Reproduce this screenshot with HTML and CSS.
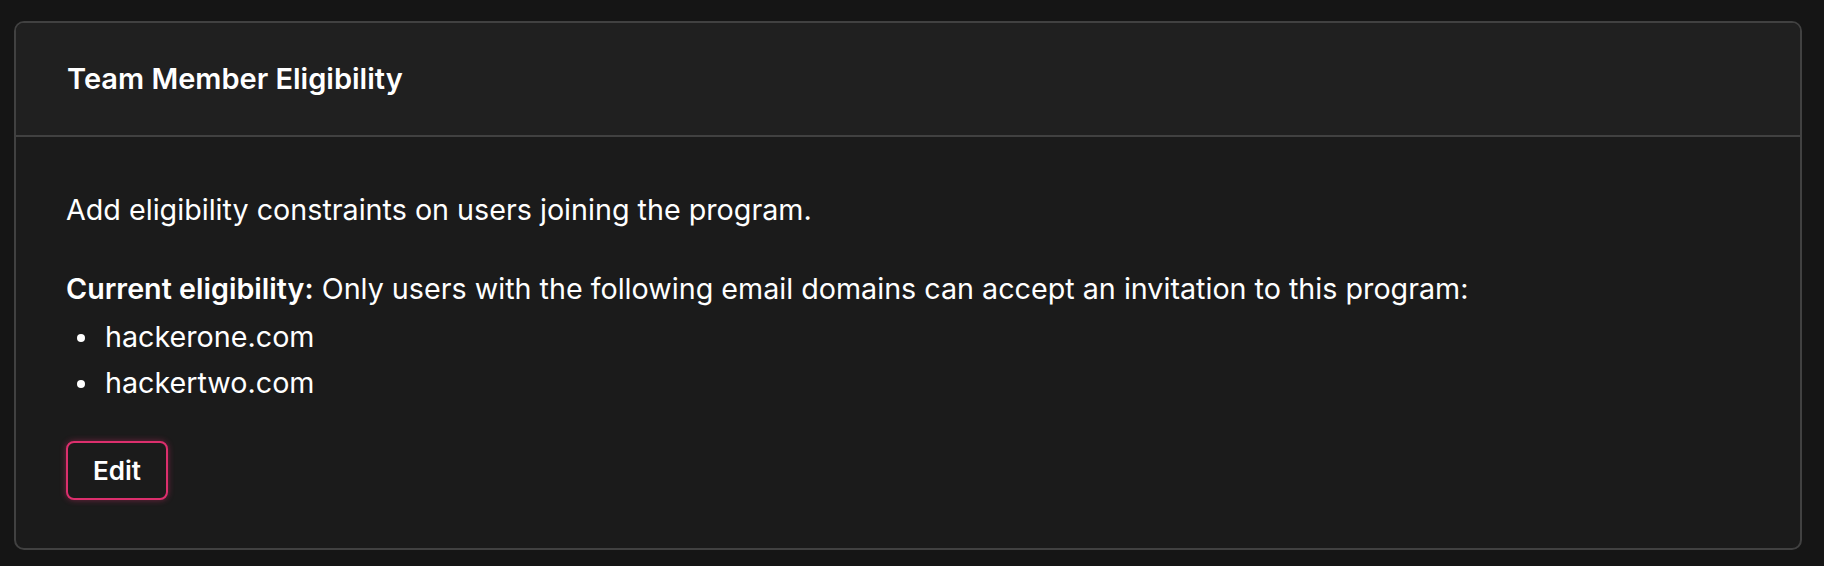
FILE: index.html
```html
<!DOCTYPE html>
<html lang="en">
<head>
<meta charset="utf-8">
<title>Team Member Eligibility</title>
<link rel="stylesheet" href="styles.css">
</head>
<body>
<section class="card">
  <header class="card-header">
    <h2 class="card-title">Team Member Eligibility</h2>
  </header>
  <div class="card-body">
    <p class="intro">Add eligibility constraints on users joining the program.</p>
    <p class="current"><strong>Current eligibility:</strong> Only users with the following email domains can accept an invitation to this program:</p>
    <ul class="domains">
      <li>hackerone.com</li>
      <li>hackertwo.com</li>
    </ul>
    <button class="btn-edit" type="button">Edit</button>
  </div>
</section>
</body>
</html>
```
FILE: styles.css
```css
html, body {
  margin: 0;
  background: #151515;
}
body {
  padding: 21px 22px 16px 14px;
  font-family: Inter, "Noto Sans", sans-serif;
  color: #ffffff;
}
.card {
  border: 2px solid #414141;
  border-radius: 10px;
  background: #1b1b1b;
  overflow: hidden;
}
.card-header {
  height: 112px;
  display: flex;
  align-items: center;
  padding: 0 51px;
  background: #202020;
  border-bottom: 2px solid #414141;
}
.card-title {
  margin: 0;
  font-size: 29px;
  line-height: 34px;
  font-weight: 600;
  letter-spacing: 0;
}
.card-body {
  padding: 52px 50px 48px;
}
.intro, .current {
  margin: 0;
  font-size: 28.7px;
  line-height: 42px;
  font-weight: 400;
  white-space: nowrap;
}
.intro {
  margin-bottom: 37px;
}
.current strong {
  font-weight: 600;
}
.domains {
  list-style: none;
  margin: 4px 0 0;
  padding: 0 0 0 39px;
}
.domains li {
  font-size: 28.7px;
  line-height: 46px;
}
.domains li::before {
  content: "";
  display: inline-block;
  width: 8px;
  height: 8px;
  border-radius: 50%;
  background: #ffffff;
  margin-left: -28px;
  margin-right: 20px;
  vertical-align: 5px;
}
.btn-edit {
  margin-top: 35px;
  display: block;
  width: 102px;
  height: 59px;
  padding: 0;
  border: 2px solid #dc2f6d;
  border-radius: 8px;
  background: #1b1b1b;
  color: #ffffff;
  font-family: Inter, "Noto Sans", sans-serif;
  font-size: 26px;
  font-weight: 600;
  box-shadow: 0 0 6px rgba(220, 47, 109, 0.45);
  cursor: pointer;
}
```
